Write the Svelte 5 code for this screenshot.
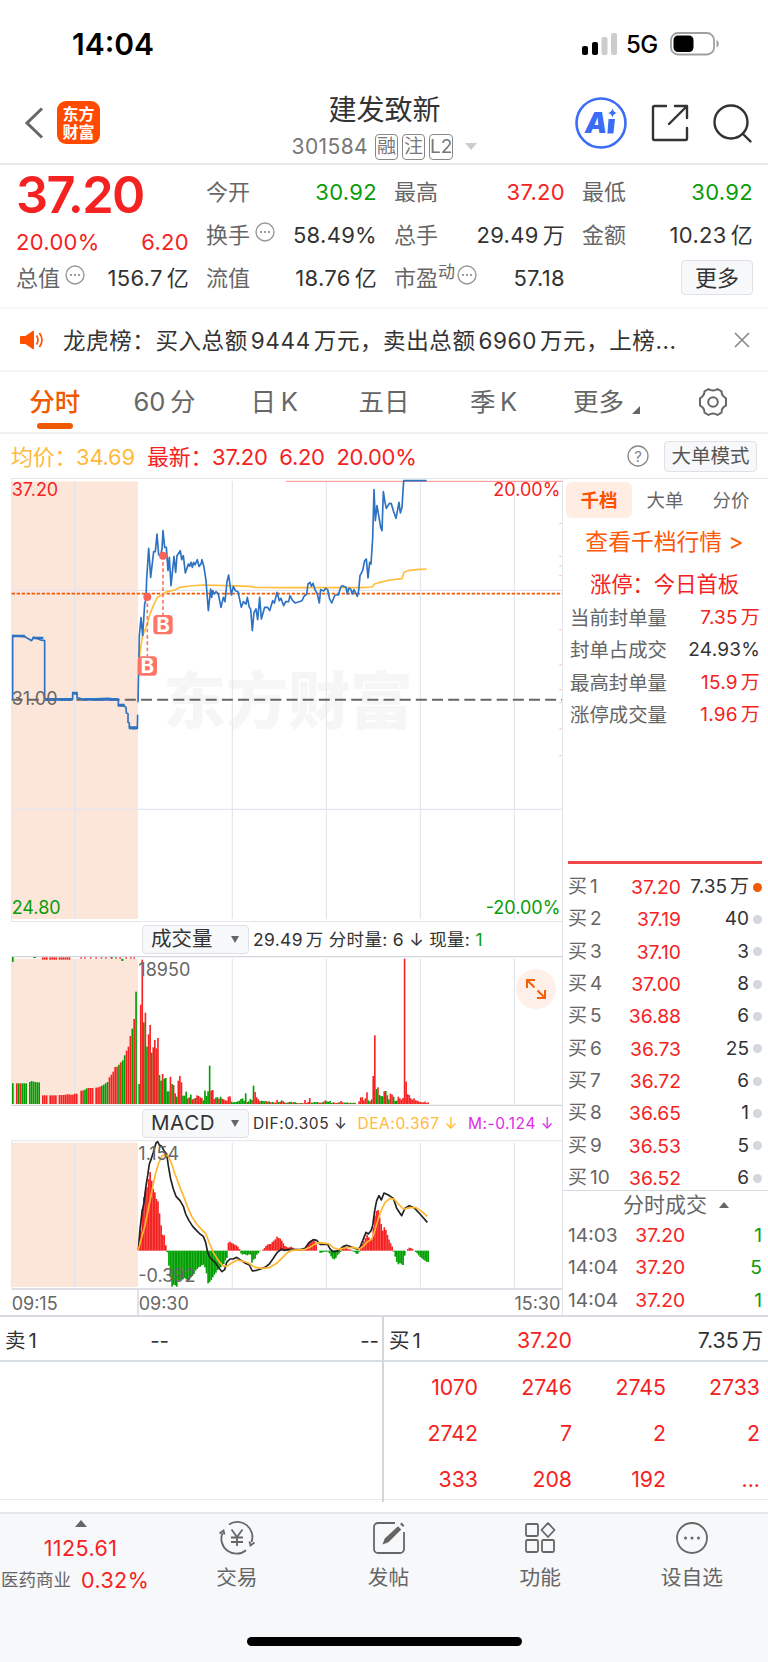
<script>
	const columns = [
		[
			{ label: '今开', value: '30.92', color: 'green' },
			{ label: '换手', value: '58.49%', more: true },
			{ label: '流值', value: '18.76亿' }
		],
		[
			{ label: '最高', value: '37.20', color: 'red' },
			{ label: '总手', value: '29.49万' },
			{ label: '市盈', sup: '动', value: '57.18', more: true }
		],
		[
			{ label: '最低', value: '30.92', color: 'green' },
			{ label: '金额', value: '10.23亿' }
		]
	];
	const tabs = ['分时', '60 分', '日 K', '五日', '季 K'];
	const limits = [
		['当前封单量', '7.35', '万', 'red'],
		['封单占成交', '24.93%', '', ''],
		['最高封单量', '15.9', '万', 'red'],
		['涨停成交量', '1.96', '万', 'red']
	];
	const bids = [
		['37.20', '7.35万'],
		['37.19', '40'],
		['37.10', '3'],
		['37.00', '8'],
		['36.88', '6'],
		['36.73', '25'],
		['36.72', '6'],
		['36.65', '1'],
		['36.53', '5'],
		['36.52', '6']
	];
	const trades = [
		['14:03', '37.20', '1'],
		['14:04', '37.20', '5'],
		['14:04', '37.20', '1']
	];
	const queue = ['1070', '2746', '2745', '2733', '2742', '7', '2', '2', '333', '208', '192', '...'];

	// chart units are a third of a pixel, the afternoon half starts at 870
	const grid = [224, 697, 979, 1261, 1543];
	const shift = (points) =>
		points
			.split(' ')
			.map((p) => {
				let [x, y] = p.split(',');
				return `${+x + 870},${y}`;
			})
			.join(' ');

	const auction =
		'38,691 38,500 75,503 95,515 100,505 108,507 122,513 134,515 134,691 218,691 218,672 231,672 231,686 250,691 325,688 355,692 355,708 372,711 378,715 379,732 384,734 384,760 388,762 388,773 398,779 412,778 413,737';
	const price =
		'414,700 416,600 418,500 423,446 428,500 434,405 438,390 440,330 446,238 452,325 461,248 466,248 471,195 476,258 482,258 486,240 489,185 494,235 499,235 504,305 508,265 513,350 522,262 527,310 531,260 541,245 545,272 550,260 556,312 565,285 569,292 573,280 577,295 581,280 585,288 592,272 597,292 603,285 606,272 612,295 618,335 625,425 632,360 635,385 638,365 643,375 648,368 655,375 663,415 670,385 675,398 681,338 686,318 694,378 700,352 706,365 714,368 724,415 730,398 738,405 742,385 748,415 752,420 757,485 762,430 768,420 773,452 779,385 784,450 794,415 803,415 809,425 818,395 823,402 831,370 838,395 843,388 851,410 857,398 866,398 ' +
		shift(
			'0,380 8,395 16,402 36,395 42,382 50,375 54,345 60,340 64,352 69,343 75,362 82,375 88,402 92,362 101,366 107,358 113,362 119,390 125,402 135,378 145,378 152,355 157,350 168,355 172,375 176,358 182,360 187,375 192,362 202,382 206,365 210,320 218,305 224,275 229,270 234,327 239,280 243,285 248,210 252,62 256,155 261,110 267,145 272,175 276,185 280,68 285,100 289,118 298,103 304,104 310,125 318,148 327,100 331,132 336,115 341,35 410,35'
		);
	const average =
		'416,600 420,550 428,500 434,485 442,465 450,435 460,410 472,385 485,378 500,368 525,363 540,355 570,351 610,348 680,350 750,352 765,355 ' +
		shift('0,356 210,356 247,354 252,346 270,340 300,333 336,329 342,310 358,304 380,302 410,300');
	const dif =
		'415,993 420,930 426,880 432,850 438,800 443,770 448,735 453,722 460,700 468,672 473,668 478,678 485,682 492,695 500,705 505,740 512,780 520,810 528,832 540,845 550,862 557,885 567,905 578,922 590,935 600,945 610,952 617,970 623,1000 628,1012 636,1022 645,1030 655,1045 666,1058 674,1052 680,1030 690,1020 700,1020 710,1015 720,1022 735,1032 748,1038 757,1056 770,1054 782,1050 795,1045 808,1035 820,1018 832,1000 845,990 852,994 865,992 ' +
		shift(
			'5,991 30,992 45,988 58,970 70,962 80,964 90,976 113,976 120,990 130,998 145,995 160,982 170,979 185,984 203,991 210,985 222,955 228,940 235,945 243,935 248,920 254,875 260,845 267,830 274,843 282,822 295,828 310,838 320,868 335,890 345,868 358,860 372,866 390,885 412,910'
		);
	const dea =
		'415,993 425,955 435,920 445,870 455,820 465,770 475,735 485,712 495,706 505,712 515,735 525,765 540,805 550,830 562,862 575,892 590,915 605,932 617,943 628,972 640,1000 655,1025 668,1040 680,1042 695,1032 712,1023 730,1027 745,1032 765,1045 790,1048 810,1045 830,1033 845,1018 860,1003 ' +
		shift(
			'5,994 45,991 60,985 78,973 90,971 118,975 130,986 145,991 165,987 190,985 208,990 220,982 232,968 243,962 250,950 260,915 272,878 285,850 300,838 312,840 325,855 340,870 360,866 378,866 395,877 412,892'
		);

	// r = up, g = down, the number is the bar height
	function bars(x0, step, list) {
		return list.split(' ').map((b, i) => ({ x: x0 + i * step, h: +b.slice(1), up: b[0] === 'r' }));
	}
	const auctionBars = [
		...bars(36, 5.7, 'g62'),
		...bars(48, 5.6, 'r62 g62 r62 g62 g62 g62'),
		...bars(87, 5.6, 'g66 g69 g67 g66 g65 g65'),
		...bars(126, 5.7, 'r26 r26 r26'),
		...bars(148, 5.7, 'r26 r26 r26 r26'),
		...bars(176, 5.75, 'r27 r27 r27 r28 r29 r29 r28 r28 r31 r31'),
		...bars(241, 5.7, 'r40 r41 g43 g47 r48 r48 r48'),
		...bars(286, 5.7, 'r49 r50 r52 g55 g58 g62 g66 r80 r88 r97 r111 r112 g118 r125 g131 g146 r160 r172 r204 g226 r255 g337')
	];
	const volume = [
		...bars(
			415,
			4.7,
			'g60 r298 r433 g245 r274 g172 r209 r237 g154 r170 r192 r167 r198 g87 g70 r90 g76 g78 g38 g38 r82 g60 r57 r32 g22 r70 r84 r65 g25 g25 g37 r17 r20 g28 r14 r16 g18 r26 r24 r20 r18 g11 g40 g24 g38 g115 r40 r42 r15 g20 g20 r16 g22 r16 r14 r11 r10 r22 r23 g7 g5 g6 g6 g8 g10 g15 g17 g10 g32 r6 g8 g15 r12 g55 r36 r20 r14 r8 g10 g9 g8 r9 r7 g8 r5 g6 r5 r4 r12 g6 r7 g11 r8 r5 g3 r5 g6 g7'
		),
		...bars(
			875,
			4.7,
			'r4 g6 g5 r3 r2 g3 r3 r2 r12 r3 r6 r18 r4 g4 g6 g5 g6 r4 r4 g5 r7 r11 g8 g7 g9 r3 g5 r4 r3 g4 r5 r9 r5 g4 g4 g5 r3 g4 g3 r4 g3'
		),
		...bars(
			1075,
			4.7,
			'r8 r20 r20 r11 r17 r35 g11 r8 g14 r84 r206 g45 r50 g27 g24 g23 r38 g39 r26 g14 r31 r28 g22 g9 g10 r22 r17 r13 r18 r436 r67 r29 r27 r17 r13 r17 r11 r10 r8 r6 r5 r5 r7 r3 r5'
		)
	];
	const hist = [
		...bars(
			415,
			4.7,
			'r10 r60 r125 r160 r175 r190 r215 r236 r210 r185 r175 r155 r148 r112 r76 r48 r46 r16 g5 g45 g80 g108 g102 g104 g108 g90 g88 g85 g86 g82 g86 g92 g88 g80 g76 g70 g60 g55 g50 g48 g44 g42 g50 g68 g98 g94 g88 g80 g72 g66 g58 g54 g50 g46 g40 g30 g22 r24 r27 r23 r21 r18 r16 r12 r5 g8 g12 g10 g12 g14 g11 g12 g36 g27 g24 g12 g8 g2 r0 r3 r8 r14 r18 r20 r20 r26 r30 r34 r42 r38 r36 r30 r22 r14 r12 r9 r10'
		),
		...bars(871, 4.7, 'r12 r9 r5 r2 r1 r1 r2 r1 r3 r8 r16 r24 r29 r32 r34 r28 r18'),
		...bars(958, 4.7, 'g6 g6 g4 g3 g3 g3 g8 g17 g24 g26 g22 g14 g9 g4 r6 r10 r11 r8 r4 r4 r2 g2 g4 g9 g9 g3'),
		...bars(
			1080,
			4.7,
			'r12 r20 r28 r38 r47 r40 r34 r34 r70 r105 r119 r122 r100 r80 r60 r70 r62 r47 r33 r22 r12 g3 g18 g34 g41 g37 g41 g43 g15 r0 r5 r9 r8 r5 r0 g4 g8 g14 g19 g23 g27 g30 g33 g34'
		)
	];
	const topTicks = [126, 132, 138, 148, 154, 160, 166, 176, 182, 188, 194, 200, 206, 241, 252, 270, 286, 302, 315, 332, 345, 358, 376, 390, 400];
	const edgeTicks = [163, 262, 291, 320, 482, 588, 662, 700, 780, 860];
</script>

{#snippet dots()}
	<svg class="dots" width="20" height="20" viewBox="0 0 20 20">
		<circle cx="10" cy="10" r="9" fill="none" stroke="#999" stroke-width="1.4" />
		<circle cx="6" cy="10" r="1.1" /><circle cx="10" cy="10" r="1.1" /><circle cx="14" cy="10" r="1.1" />
	</svg>
{/snippet}

{#snippet number(text)}
	{#if /[万亿]$/.test(text)}{text.slice(0, -1)}<i>{text.slice(-1)}</i>{:else}{text}{/if}
{/snippet}

<main>
	<div class="status">
		<b>14:04</b>
		<svg width="38" height="24" viewBox="0 0 38 24">
			<rect x="1" y="14" width="6" height="9" rx="2" />
			<rect x="11" y="10" width="6" height="13" rx="2" />
			<rect x="20.5" y="5" width="6" height="18" rx="2" fill="#ccc" />
			<rect x="30" y="1" width="6" height="22" rx="2" fill="#ccc" />
		</svg>
		<span>5G</span>
		<svg width="50" height="24" viewBox="0 0 50 24">
			<rect x="1" y="1" width="43" height="21.5" rx="7" fill="none" stroke="#a0a0a0" stroke-width="1.8" />
			<rect x="3.5" y="3.5" width="20" height="16.5" rx="4.5" />
			<path d="M46.500 8c3 1 3 6.500 0 7.500z" fill="#a0a0a0" />
		</svg>
	</div>

	<header>
		<svg class="back" width="22" height="34" viewBox="0 0 22 34" fill="none" stroke="#666" stroke-width="3">
			<path d="M18 2.500 3 17l15 14.500" />
		</svg>
		<div class="logo"><span>东方</span><span>财富</span></div>
		<div class="title">
			<h1>建发致新</h1>
			<div class="code">301584 <em>融</em><em>注</em><em>L2</em><s></s></div>
		</div>
		<svg class="ai" width="52" height="52" viewBox="0 0 52 52">
			<circle cx="26" cy="26" r="24.500" fill="#fff" stroke="#3c6cf5" stroke-width="2.600" />
			<text x="10" y="36">A</text>
			<path d="M33.500 22h6.500l-1.600 14.500h-6z" fill="#3c6cf5" />
			<path d="M37.500 11.500q.8 3.700 4.500 4.500-3.700.8-4.500 4.500-.8-3.700-4.500-4.500 3.700-.8 4.500-4.500z" fill="#3c6cf5" />
		</svg>
		<svg width="38" height="38" viewBox="0 0 38 38" fill="none" stroke="#333" stroke-width="2.400" stroke-linejoin="round" stroke-linecap="round">
			<path d="M15 2H3.500a1.500 1.500 0 0 0-1.500 1.500v31a1.500 1.500 0 0 0 1.500 1.500h31a1.500 1.500 0 0 0 1.500-1.500V24M24 2h12V14M36 2 18 20" />
		</svg>
		<svg class="find" width="40" height="40" viewBox="0 0 40 40" fill="none" stroke="#333" stroke-width="2.400" stroke-linecap="round">
			<circle cx="19" cy="19" r="16.500" /><path d="m31 31 7.500 7.500" />
		</svg>
	</header>

	<section class="quote">
		<div class="col first">
			<div class="big">37.20</div>
			<div class="change"><span>20.00%</span><span>6.20</span></div>
			<div class="cell">
				<label>总值{@render dots()}</label><span>{@render number('156.7亿')}</span>
			</div>
		</div>
		{#each columns as column}
			<div class="col top">
				{#each column as item}
					<div class="cell">
						<label>{item.label}{#if item.sup}<sup>{item.sup}</sup>{/if}{#if item.more}{@render dots()}{/if}</label>
						<span class={item.color}>{@render number(item.value)}</span>
					</div>
				{/each}
				{#if column.length < 3}
					<button class="more">更多</button>
				{/if}
			</div>
		{/each}
	</section>

	<section class="news">
		<svg width="24" height="20" viewBox="0 0 24 20" fill="#ff5000">
			<path d="M1 6h4.500L13 .8q1-.5 1 .6v17.200q0 1.100-1 .6L5.500 14H1q-1 0-1-1V7q0-1 1-1z" />
			<path d="M16.500 5.500q3 4.500 0 9M19.500 3q5 7 0 14" fill="none" stroke="#ff5000" stroke-width="1.700" />
		</svg>
		<p>龙虎榜：买入总额<u>9444</u>万元，卖出总额<u>6960</u>万元，上榜...</p>
		<svg width="16" height="16" viewBox="0 0 16 16" stroke="#888" stroke-width="1.600"><path d="m1 1 14 14M15 1 1 15" /></svg>
	</section>

	<nav class="tabs">
		{#each tabs as tab, i}
			<span class:active={i === 0}>{tab}</span>
		{/each}
		<span class="drop">更多<s></s></span>
		<svg width="30" height="30" viewBox="0 0 30 30" fill="none" stroke="#666" stroke-width="2" stroke-linejoin="round">
			<path d="M10.500 2q4.500 3 9 0l4 2.300q0 4.500 4.500 7v7.400q-4.500 2-4.500 7L19.500 28q-4.500-3-9 0l-4-2.300q0-5-4.500-7v-7.400q4.500-2.500 4.500-7z" />
			<circle cx="15" cy="15" r="4.800" />
		</svg>
	</nav>

	<div class="legend">
		<span class="avg">均价：34.69</span>
		<span class="now">最新：37.20&nbsp; 6.20&nbsp; 20.00%</span>
		<svg width="22" height="22" viewBox="0 0 22 22">
			<circle cx="11" cy="11" r="10" fill="none" stroke="#888" stroke-width="1.300" />
			<text x="11" y="16.500" text-anchor="middle">?</text>
		</svg>
		<button>大单模式</button>
	</div>

	<div class="board">
		<div class="charts">
			<svg class="chart" width="562" height="444" viewBox="0 27 1686 1332">
				<rect x="35" y="37" width="379" height="1313" fill="#fce6da" />
				<text class="mark" x="490" y="766">东方财富</text>
				{#each grid as x}
					<path class="grid" d="M{x} 36V1350" />
				{/each}
				<path class="grid" d="M35 364H1686M35 1021H1686" />
				<path class="frame" d="M35 28.500H1686M35 1357.500H1686M35 27V1359" />
				{#each edgeTicks as y}
					<path d="M1678 {y}h7" stroke="#ffb3b3" stroke-width="3" />
				{/each}
				<path d="M858 37H1686" stroke="#ff8f8f" stroke-width="3" />
				<path d="M35 374H1686" stroke="#f25a0a" stroke-width="5" stroke-dasharray="10 5" />
				<path d="M35 692H1686" stroke="#666" stroke-width="6" stroke-dasharray="33 15.500" />
				<polyline points={average} stroke="#ffbe3c" />
				<polyline points={auction} stroke="#2e72c2" />
				<path d="M134 691H218M250 691H355" stroke="#2e72c2" stroke-width="8" />
				<path d="M36 501H75M98 507H130" stroke="#2e72c2" stroke-width="8" />
				<path d="M216 673H233M353 709H374M386 776H412" stroke="#2e72c2" stroke-width="9" />
				<polyline points={price} stroke="#2e72c2" />
				<text class="red" x="35" y="81">37.20</text>
				<text class="red" x="1681" y="81" text-anchor="end">20.00%</text>
				<text x="35" y="709">31.00</text>
				<text class="green" x="35" y="1334">24.80</text>
				<text class="green" x="1681" y="1334" text-anchor="end">-20.00%</text>
				{#each [[442, 384, 562], [489, 260, 438]] as [x, y, b]}
					<path d="M{x} {y}V{b}" stroke="#ff7468" stroke-width="5" stroke-dasharray="11 8" />
					<circle cx={x} cy={y} r="12" fill="#fb6358" />
					<rect x={x - 29} y={b} width="58" height="58" rx="11" fill="#ff7468" />
					<text class="b" {x} y={b + 51} text-anchor="middle">B</text>
				{/each}
			</svg>

			<div class="bar">
				<button>成交量<s></s></button>
				<p>29.49<i>万</i> 分时量: 6 ↓ 现量: <span class="green">1</span></p>
			</div>

			<div class="volume">
				<svg class="chart" width="562" height="150" viewBox="0 110 1686 450">
					<rect x="35" y="118" width="379" height="436" fill="#fce6da" />
					{#each grid as x}
						<path class="grid" d="M{x} 118V554" />
					{/each}
					<path class="frame dark" d="M35 112H1686M35 558H1686" />
					<path class="frame" d="M35 110V558" />
					<path d="M36 113h5v15h-5zM364 118h6v7h-6zM100 113h8v3h-8zM332 113h6v4h-6z" fill="#0a9c0a" />
					{#each topTicks as x}
						<rect {x} y="114" width="5" height={x < 210 ? 7 : 4} fill="#f52222" />
					{/each}
					{#each auctionBars as bar}
						<rect x={bar.x} y={554 - bar.h} width="5" height={bar.h} fill={bar.up ? '#f52222' : '#009e00'} />
					{/each}
					{#each volume as bar}
						<rect x={bar.x} y={554 - bar.h} width="4.900" height={bar.h} fill={bar.up ? '#f52222' : '#009e00'} />
					{/each}
					<text x="415" y="170">18950</text>
				</svg>
				<div class="expand">
					<svg width="22" height="22" viewBox="0 0 22 22" fill="none" stroke="#f2600c" stroke-width="2">
						<path d="M2 10V2h8M2 2l7.500 7.500M20 12v8h-8M20 20l-7.500-7.500" />
					</svg>
				</div>
			</div>

			<div class="bar macd">
				<button>MACD<s></s></button>
				<p><span>DIF:0.305 ↓</span><span class="dea">DEA:0.367 ↓</span><span class="m">M:-0.124 ↓</span></p>
			</div>

			<svg class="chart" width="562" height="176" viewBox="0 663 1686 528">
				<rect x="35" y="671" width="379" height="433" fill="#fce6da" />
				{#each grid as x}
					<path class="grid" d="M{x} 671V1105" />
				{/each}
				<path class="frame" d="M35 665H1686M35 663V1109" />
				<path class="frame dark" d="M35 1110H1686M414 1110V1191" />
				{#each hist as bar}
					<rect x={bar.x} y={bar.up ? 995 - bar.h : 995} width="5" height={bar.h} fill={bar.up ? '#f52222' : '#009e00'} />
				{/each}
				<polyline points={dif} stroke="#222" />
				<polyline points={dea} stroke="#ffb62e" />
				<text x="415" y="722">1.154</text>
				<text x="415" y="1089">-0.392</text>
				<text x="35" y="1172">09:15</text>
				<text x="416" y="1172">09:30</text>
				<text x="1681" y="1172" text-anchor="end">15:30</text>
			</svg>
		</div>

		<aside>
			<div class="switch"><span class="on">千档</span><span>大单</span><span>分价</span></div>
			<a class="deep">查看千档行情 &gt;</a>
			<div class="limit">涨停：今日首板</div>
			{#each limits as [label, value, unit, color]}
				<div class="row"><label>{label}</label><span class={color}>{value}{#if unit}<i>{unit}</i>{/if}</span></div>
			{/each}
			<hr />
			{#each bids as [p, amount], i}
				<div class="bid">
					<label>买<u>{i + 1}</u></label><span class="red">{p}</span><span>{@render number(amount)}</span>
					<s class:hot={i === 0}></s>
				</div>
			{/each}
			<div class="deal">分时成交<s></s></div>
			{#each trades as [time, p, amount]}
				<div class="trade"><label>{time}</label><span class="red">{p}</span><span class="green">{amount}</span></div>
			{/each}
		</aside>
	</div>

	<div class="level">
		<div class="side"><span>卖<u>1</u></span><span>--</span><span>--</span></div>
		<div class="side buy"><span>买<u>1</u></span><span class="red">37.20</span><span>{@render number('7.35万')}</span></div>
		<div class="empty"></div>
		<div class="queue">
			{#each queue as n}
				<span>{n}</span>
			{/each}
		</div>
	</div>

	<footer>
		<div class="menu">
			<div class="index">
				<s></s>
				<span class="red">1125.61</span>
				<div><small>医药商业</small><span class="red">0.32%</span></div>
			</div>
			<div class="item">
				<svg viewBox="0 0 36 36">
					<path d="M10 4.500A15 15 0 0 1 32.500 22M27 30.200A15 15 0 0 1 3.500 13" />
					<path d="M.5 13.500l4-3 1 4M35.500 22.500l-4 3-1-4" />
					<path d="m12.500 9.500 5.500 7.500 5.500-7.500M18 17v9M12 17.500h12M12 22h12" />
				</svg>
				<span>交易</span>
			</div>
			<div class="item">
				<svg viewBox="0 0 36 36">
					<path d="M24 3H7a4 4 0 0 0-4 4v22a4 4 0 0 0 4 4h22a4 4 0 0 0 4-4V12" />
					<path d="m13 23 1.500-4L27 7.500l2 2L17 21.500z" fill="#666" /><path d="m30.500 5.500 1.500-1.500" stroke-width="4" />
				</svg>
				<span>发帖</span>
			</div>
			<div class="item">
				<svg viewBox="0 0 36 36">
					<rect x="4" y="4" width="12" height="12" rx="1.500" /><rect x="4" y="20" width="12" height="12" rx="1.500" />
					<rect x="20" y="20" width="12" height="12" rx="1.500" />
					<path d="m26 3 6.500 7-6.500 7-6.500-7z" stroke-linejoin="round" />
				</svg>
				<span>功能</span>
			</div>
			<div class="item">
				<svg viewBox="0 0 36 36">
					<circle cx="18" cy="18" r="15" />
					<g fill="#666" stroke="none"><circle cx="11.500" cy="18" r="1.500" /><circle cx="18" cy="18" r="1.500" /><circle cx="24.500" cy="18" r="1.500" /></g>
				</svg>
				<span>设自选</span>
			</div>
		</div>
		<div class="home"></div>
	</footer>
</main>

<style>
	:global(body) {
		margin: 0;
		background: #fff;
	}
	main {
		width: 768px;
		height: 1662px;
		overflow: hidden;
		display: flex;
		flex-direction: column;
		font-family: Inter, 'Noto Sans CJK SC', sans-serif;
		font-size: 22px;
		color: #333;
		white-space: nowrap;
	}
	main > * {
		flex: none;
		box-sizing: border-box;
	}
	svg {
		display: block;
		flex: none;
	}
	i {
		font-style: normal;
		margin-left: 3px;
	}
	u {
		text-decoration: none;
		margin: 0 3px;
	}
	s {
		display: inline-block;
		text-decoration: none;
	}
	button {
		font: inherit;
		color: #333;
		background: #f7f8fa;
		border: 1.5px solid #dfe1e6;
		border-radius: 4px;
		padding: 0;
		box-sizing: border-box;
	}
	.red {
		color: #f52222;
		fill: #f52222;
	}
	.green {
		color: #0a9c0a;
		fill: #0a9c0a;
	}

	.status {
		height: 88px;
		display: flex;
		align-items: center;
		color: #000;
		padding-left: 72px;
	}
	.status b {
		font-size: 30px;
		font-weight: 600;
		width: 509px;
	}
	.status span {
		font-size: 24px;
		font-weight: 500;
		width: 43px;
		padding-left: 7px;
		box-sizing: border-box;
		margin-right: 8px;
		letter-spacing: -0.5px;
	}

	header {
		height: 77px;
		border-bottom: 2px solid #e9e9ec;
		display: flex;
		align-items: center;
		padding: 0 16px 6px 24px;
	}
	.logo {
		width: 43px;
		height: 43px;
		border-radius: 9px;
		background: #ff4a00;
		color: #fff;
		font-size: 16px;
		font-weight: 700;
		line-height: 18px;
		display: flex;
		flex-direction: column;
		align-items: center;
		justify-content: center;
		margin-left: 11px;
	}
	.title {
		flex: 1;
		text-align: center;
		padding-left: 138px;
		padding-right: 44px;
		margin-top: 5px;
	}
	h1 {
		font-size: 28px;
		line-height: 43px;
		font-weight: 400;
		margin: 0;
	}
	.code {
		font-size: 21px;
		letter-spacing: 0.4px;
		line-height: 30px;
		color: #777;
		display: flex;
		align-items: center;
		justify-content: center;
	}
	em {
		font-style: normal;
		letter-spacing: 0;
		font-size: 19px;
		line-height: 24px;
		min-width: 21px;
		height: 24px;
		border: 1.5px solid #888;
		border-radius: 4px;
		margin-left: 4px;
	}
	em:first-of-type {
		margin-left: 7px;
	}
	.code s {
		border: 6px solid transparent;
		border-top: 7px solid #ccc;
		border-bottom: 0;
		margin-left: 12px;
	}
	.ai {
		margin-right: 24px;
	}
	.ai text {
		font-size: 28px;
		font-weight: 900;
		font-style: italic;
		fill: #3c6cf5;
	}
	.find {
		margin-left: 23px;
	}

	.quote {
		height: 144px;
		padding: 0 15px 0 18px;
		display: grid;
		grid-template-columns: repeat(4, 171px);
		gap: 17px;
		border-bottom: 2px solid #f7f7f8;
	}
	.top {
		padding-top: 6px;
	}
	.first {
		margin-left: -2px;
	}
	.big {
		font-size: 50.500px;
		font-weight: 600;
		line-height: 60px;
		letter-spacing: -1.600px;
		color: #f52222;
	}
	.change {
		display: flex;
		justify-content: space-between;
		line-height: 34px;
		height: 32px;
		letter-spacing: 0.3px;
		color: #f52222;
	}
	.cell {
		display: flex;
		justify-content: space-between;
		line-height: 43px;
		height: 43px;
	}
	.cell > span {
		letter-spacing: 0.3px;
	}
	.cell i {
		margin-left: 4px;
	}
	label {
		color: #666;
		display: flex;
	}
	sup {
		font-size: 17px;
		line-height: 30px;
	}
	.dots {
		margin: 8px 0 0 5px;
		fill: #888;
	}
	sup + .dots {
		margin-left: 2px;
	}
	.more {
		display: block;
		width: 72px;
		height: 35px;
		line-height: 30px;
		margin: 3px 0 0 auto;
	}

	.news {
		height: 63px;
		display: flex;
		align-items: center;
		padding: 0 18px 0 20px;
		border-bottom: 2px solid #f4f4f6;
	}
	.news p {
		margin: -2px 0 0;
		padding-left: 19px;
		flex: 1;
		font-size: 22.500px;
		letter-spacing: 0.600px;
	}

	.tabs {
		height: 62px;
		border-bottom: 2px solid #f0f0f2;
		display: flex;
		align-items: center;
		font-size: 25.500px;
		color: #666;
	}
	.tabs span {
		width: 109.700px;
		text-align: center;
		line-height: 60px;
		position: relative;
		word-spacing: -2.500px;
	}
	.tabs .active {
		color: #f05a00;
		font-weight: 500;
	}
	.active::after {
		content: '';
		position: absolute;
		left: 37px;
		bottom: 3px;
		width: 36px;
		height: 6px;
		border-radius: 3px;
		background: #f05a00;
	}
	.tabs .drop {
		margin-left: 12px;
		width: 92px;
	}
	.drop s {
		border-left: 8px solid transparent;
		border-bottom: 8px solid #666;
		margin-left: 8px;
		vertical-align: -3px;
	}
	.tabs svg {
		margin-left: 46px;
	}

	.legend {
		height: 44px;
		display: flex;
		align-items: center;
		padding: 0 11px;
		color: #f52222;
		letter-spacing: -0.3px;
	}
	.legend span {
		margin-top: -2px;
	}
	.avg {
		color: #ffb93b;
		width: 136px;
	}
	.now {
		flex: 1;
	}
	.legend text {
		font-size: 15px;
		fill: #888;
	}
	.legend button {
		width: 93px;
		height: 31px;
		font-size: 19.500px;
		line-height: 26px;
		margin-left: 15px;
		color: #555;
	}

	.board {
		display: flex;
		height: 839px;
		border-bottom: 2px solid #d8dae0;
	}
	.charts {
		width: 562px;
		border-right: 1px solid #e3e5ea;
		flex: none;
	}
	.chart {
		fill: none;
	}
	.chart text {
		font-size: 54px;
		fill: #666;
	}
	.chart text.red {
		fill: #f52222;
	}
	.chart text.green {
		fill: #0a9c0a;
	}
	.chart .mark {
		font-size: 187px;
		font-weight: 900;
		fill: #f6f6f6;
	}
	.chart text.b {
		font-size: 62px;
		font-weight: 700;
		fill: #fff;
	}
	.chart polyline {
		stroke-width: 5;
		stroke-linejoin: round;
	}
	.grid {
		stroke: #e2e5ef;
		stroke-width: 3.5;
	}
	.frame {
		stroke: #e3e5ea;
		stroke-width: 3;
	}
	.dark {
		stroke: #d2d5dc;
		stroke-width: 4;
	}
	.bar {
		height: 34px;
		display: flex;
		align-items: center;
		padding-left: 142px;
		font-size: 17.500px;
	}
	.bar button {
		width: 107px;
		height: 29px;
		font-size: 20.500px;
		line-height: 24px;
		text-align: left;
		padding-left: 8px;
		display: flex;
		align-items: center;
		justify-content: space-between;
		padding-right: 9px;
	}
	.bar s {
		border: 4px solid transparent;
		border-top: 7px solid #666;
		border-bottom: 0;
	}
	.bar p {
		margin: -1px 0 0 4px;
		letter-spacing: 0.300px;
	}
	.macd button {
		letter-spacing: 0.600px;
	}
	.macd p {
		margin-top: 0;
		font-size: 15.500px;
		letter-spacing: 0.550px;
		display: flex;
		gap: 10px;
	}
	.dea {
		color: #ffb93b;
	}
	.m {
		color: #e12be6;
	}
	.volume {
		position: relative;
	}
	.expand {
		position: absolute;
		left: 516px;
		top: 13px;
		width: 40px;
		height: 40px;
		border-radius: 50%;
		background: #fef0e9;
		display: flex;
		align-items: center;
		justify-content: center;
	}

	aside {
		width: 206px;
		font-size: 19px;
		border-top: 1px solid #e3e5ea;
		box-sizing: border-box;
	}
	.switch {
		display: flex;
		margin: 3px 0 0 3px;
		color: #666;
		font-size: 18.500px;
	}
	.switch span {
		width: 66px;
		line-height: 36px;
		text-align: center;
		border-radius: 6px;
	}
	.switch .on {
		background: #ffece3;
		color: #ff5000;
		font-weight: 700;
	}
	.deep {
		display: block;
		text-align: center;
		font-size: 22.800px;
		line-height: 48px;
		color: #ff5a0a;
		padding-right: 2px;
	}
	.limit {
		text-align: center;
		font-size: 21.300px;
		line-height: 36px;
		color: #f52222;
		padding-right: 2px;
	}
	.row {
		display: flex;
		justify-content: space-between;
		padding: 0 8px 0 7px;
		line-height: 32.300px;
	}
	.row label {
		font-size: 19.400px;
	}
	.row span {
		letter-spacing: 0.200px;
	}
	hr {
		border: 0;
		height: 3px;
		margin: 130px 6px 7px 5px;
		background: #f04848;
	}
	.bid {
		display: grid;
		grid-template-columns: 50px 63px 68px 9px;
		padding-left: 5px;
		line-height: 32.300px;
		align-items: center;
		text-align: right;
	}
	.bid .red {
		font-size: 19.300px;
	}
	.bid s {
		width: 9px;
		height: 9px;
		border-radius: 50%;
		background: #d3d7de;
		margin-left: 4px;
	}
	.bid .hot {
		background: #f05a00;
	}
	.deal {
		border-top: 1px solid #d8dae0;
		font-size: 21px;
		line-height: 28px;
		margin-top: -4px;
		color: #666;
		padding-left: 60px;
	}
	.deal s {
		border: 5px solid transparent;
		border-bottom: 6px solid #666;
		border-top: 0;
		margin-left: 12px;
		vertical-align: 4px;
	}
	.trade {
		display: grid;
		grid-template-columns: 60px 57px 77px;
		padding-left: 5px;
		line-height: 32.300px;
		text-align: right;
		font-size: 19.200px;
	}

	.level {
		display: grid;
		grid-template-columns: 384px 384px;
		grid-template-rows: 45px 1fr;
		height: 183px;
		border-bottom: 1px solid #e9eaee;
		font-size: 20.500px;
	}
	.side {
		display: grid;
		grid-template-columns: 60px 1fr 1fr;
		border-bottom: 2px solid #d8dde3;
		line-height: 47px;
		height: 43px;
		padding: 0 4px 0 5px;
		text-align: right;
		border-right: 2px solid #d3d5da;
	}
	.side span:first-child {
		text-align: left;
	}
	.side:first-child {
		grid-template-columns: 60px 104px 1fr;
		padding-right: 3px;
	}
	.buy {
		grid-template-columns: 60px 123px 1fr;
		border-right: 0;
		padding-right: 5px;
		font-size: 21.300px;
	}
	.buy span:first-child {
		font-size: 20.500px;
	}
	.empty {
		border-right: 2px solid #d3d5da;
	}
	.queue {
		display: grid;
		grid-template-columns: repeat(4, 94px);
		line-height: 46px;
		text-align: right;
		color: #f52222;
		font-size: 21.300px;
		padding-top: 2px;
		align-content: start;
	}

	footer {
		margin-top: 12px;
		flex: 1;
		background: #f7f8fa;
		border-top: 2px solid #e6e7eb;
	}
	.menu {
		display: flex;
		height: 90px;
		color: #666;
	}
	.index {
		width: 161px;
		display: flex;
		flex-direction: column;
		align-items: center;
		font-size: 21.500px;
		letter-spacing: 0.400px;
		line-height: 32px;
	}
	.index s {
		border: 6px solid transparent;
		border-bottom: 7px solid #666;
		border-top: 0;
		margin: 6px 0 5px;
	}
	.index div {
		align-self: flex-start;
		display: flex;
		padding-left: 1px;
	}
	small {
		font-size: 17.500px;
		letter-spacing: 0;
		margin-right: 10px;
	}
	.item {
		width: 151.700px;
		display: flex;
		flex-direction: column;
		align-items: center;
		font-size: 20.700px;
		line-height: 32px;
		padding-top: 6px;
		gap: 6px;
		box-sizing: border-box;
	}
	.item svg {
		width: 36px;
		height: 36px;
		fill: none;
		stroke: #666;
		stroke-width: 1.800;
	}
	.home {
		width: 275px;
		height: 9px;
		border-radius: 5px;
		background: #000;
		margin: 33px auto 0;
	}
</style>
